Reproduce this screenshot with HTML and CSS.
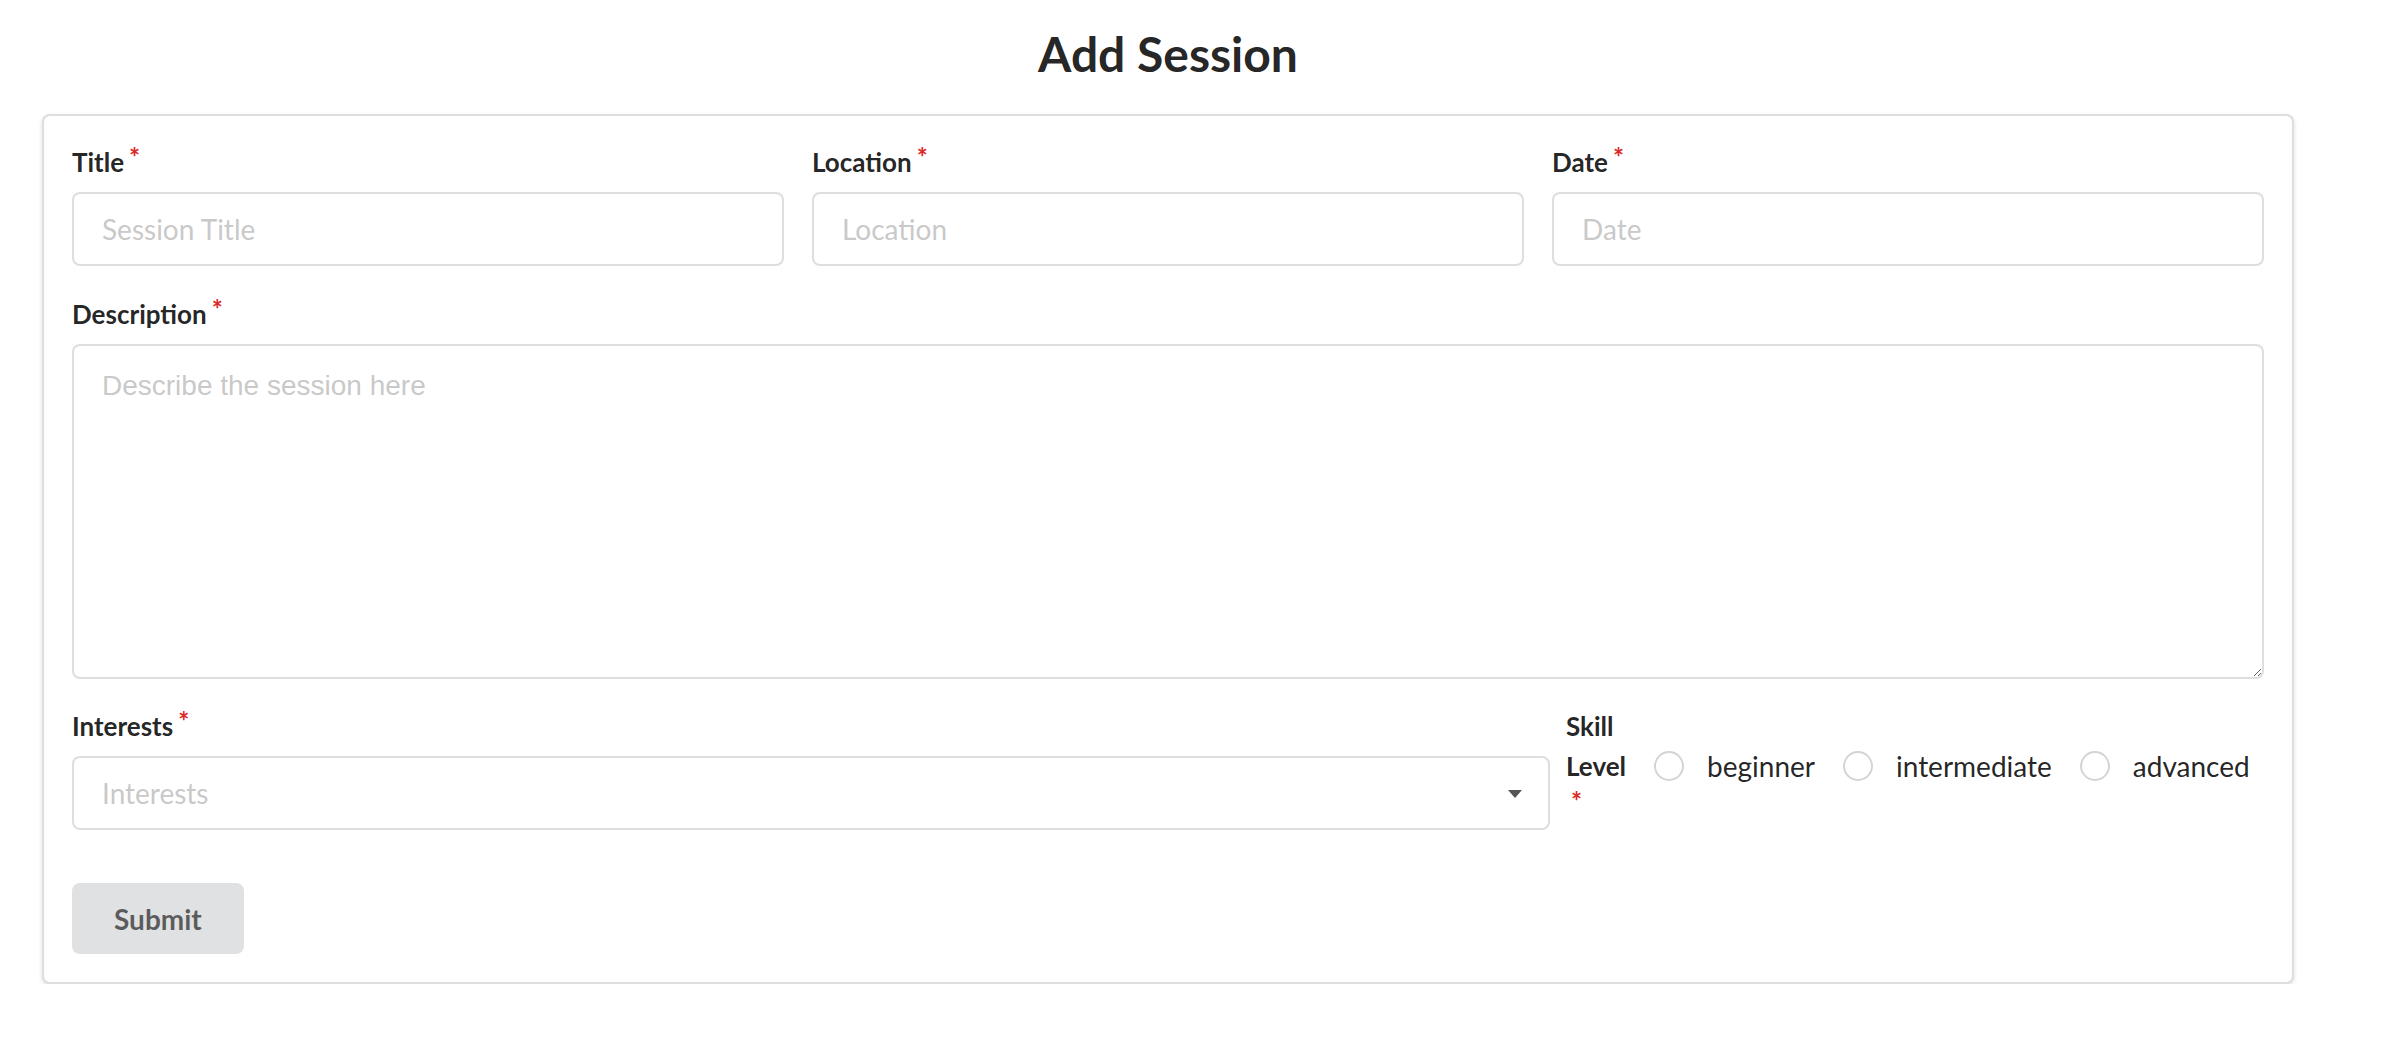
FILE: index.html
```html
<!DOCTYPE html>
<html lang="en">
<head>
<meta charset="utf-8">
<title>Add Session</title>
<link rel="stylesheet" href="styles.css">
</head>
<body>
<div class="page">
  <h2 class="page-title">Add Session</h2>
  <form class="card">
    <div class="row three">
      <div class="field">
        <label class="label">Title<span class="star">*</span></label>
        <input class="input" type="text" placeholder="Session Title">
      </div>
      <div class="field">
        <label class="label">Location<span class="star">*</span></label>
        <input class="input" type="text" placeholder="Location">
      </div>
      <div class="field">
        <label class="label">Date<span class="star">*</span></label>
        <input class="input" type="text" placeholder="Date">
      </div>
    </div>
    <div class="field desc">
      <label class="label">Description<span class="star">*</span></label>
      <textarea class="textarea" placeholder="Describe the session here"></textarea>
    </div>
    <div class="row split">
      <div class="field">
        <label class="label">Interests<span class="star">*</span></label>
        <div class="dropdown">
          <span class="ph">Interests</span>
          <span class="caret"></span>
        </div>
      </div>
      <div class="inline">
        <label class="inline-label">Skill Level<span class="star">*</span></label>
        <div class="radio"><span class="circle"></span><span class="rtext">beginner</span></div>
        <div class="radio"><span class="circle"></span><span class="rtext">intermediate</span></div>
        <div class="radio"><span class="circle"></span><span class="rtext">advanced</span></div>
      </div>
    </div>
    <button class="btn" type="button">Submit</button>
  </form>
</div>
</body>
</html>
```

FILE: styles.css
```css
html, body {
  margin: 0;
  padding: 0;
  background: #ffffff;
}

body {
  font-family: Lato, "Helvetica Neue", Arial, sans-serif;
  font-size: 28px;
  line-height: 40px;
  color: rgba(0, 0, 0, 0.87);
}

.page {
  margin: 0 96px 0 42px;
}

.page-title {
  font-size: 48px;
  font-weight: 700;
  line-height: 62px;
  margin: 23px 0 29px;
  text-align: center;
  color: rgba(0, 0, 0, 0.87);
}

.card {
  display: block;
  background: #ffffff;
  border: 2px solid rgba(34, 36, 38, 0.15);
  border-radius: 8px;
  box-shadow: 0 2px 4px 0 rgba(34, 36, 38, 0.15);
  padding: 28px;
}

.row {
  display: grid;
  column-gap: 28px;
  margin-bottom: 30px;
}

.three {
  grid-template-columns: repeat(3, minmax(0, 1fr));
}

.split {
  grid-template-columns: minmax(0, 1478fr) minmax(0, 698fr);
  column-gap: 16px;
  align-items: start;
  margin-bottom: 53px;
}

.field {
  min-width: 0;
}

.desc {
  margin-bottom: 29px;
}

.label {
  display: block;
  font-size: 26px;
  font-weight: 700;
  line-height: 37px;
  margin-bottom: 11px;
  color: rgba(0, 0, 0, 0.87);
}

.star {
  display: inline-block;
  vertical-align: top;
  margin: -5px 0 0 5px;
  color: #db2828;
}

.input {
  display: block;
  box-sizing: border-box;
  width: 100%;
  height: 74px;
  margin: 0;
  padding: 18px 28px;
  border: 2px solid rgba(34, 36, 38, 0.15);
  border-radius: 8px;
  background: #ffffff;
  font-family: Lato, "Helvetica Neue", Arial, sans-serif;
  font-size: 28px;
  line-height: 34px;
  color: rgba(0, 0, 0, 0.87);
  outline: none;
}

.input::placeholder {
  color: rgba(191, 191, 191, 0.87);
}

.textarea {
  display: block;
  box-sizing: border-box;
  width: 100%;
  height: 335px;
  margin: 0;
  padding: 22px 28px;
  border: 2px solid rgba(34, 36, 38, 0.15);
  border-radius: 8px;
  background: #ffffff;
  font-family: "Liberation Sans", Arial, sans-serif;
  font-size: 28px;
  line-height: 36px;
  color: rgba(0, 0, 0, 0.87);
  resize: vertical;
  outline: none;
}

.textarea::placeholder {
  color: rgba(191, 191, 191, 0.87);
}

.dropdown {
  display: flex;
  align-items: center;
  justify-content: space-between;
  box-sizing: border-box;
  height: 74px;
  padding: 0 26px 0 28px;
  border: 2px solid rgba(34, 36, 38, 0.15);
  border-radius: 8px;
  background: #ffffff;
}

.ph {
  font-size: 28px;
  line-height: 34px;
  color: rgba(191, 191, 191, 0.87);
}

.caret {
  width: 0;
  height: 0;
  border-left: 7px solid transparent;
  border-right: 7px solid transparent;
  border-top: 8px solid #555555;
  margin-top: 1px;
}

.inline {
  display: flex;
  align-items: center;
  margin-top: -2px;
  min-width: 0;
}

.inline-label {
  width: min-content;
  flex: none;
  font-size: 26px;
  font-weight: 700;
  line-height: 40px;
  margin-right: 28px;
  color: rgba(0, 0, 0, 0.87);
}

.radio {
  display: flex;
  align-items: center;
  flex: none;
  padding-right: 28px;
}

.circle {
  box-sizing: border-box;
  width: 30px;
  height: 30px;
  border: 2px solid #d4d4d5;
  border-radius: 50%;
  background: #ffffff;
  flex: none;
}

.rtext {
  margin-left: 23px;
  font-size: 28px;
  line-height: 34px;
  color: rgba(0, 0, 0, 0.87);
}

.btn {
  display: block;
  margin: 0;
  padding: 21.5px 42px;
  border: none;
  border-radius: 8px;
  background: #e0e1e2;
  font-family: Lato, "Helvetica Neue", Arial, sans-serif;
  font-size: 28px;
  font-weight: 700;
  line-height: 28px;
  color: rgba(0, 0, 0, 0.6);
  cursor: pointer;
}
```
